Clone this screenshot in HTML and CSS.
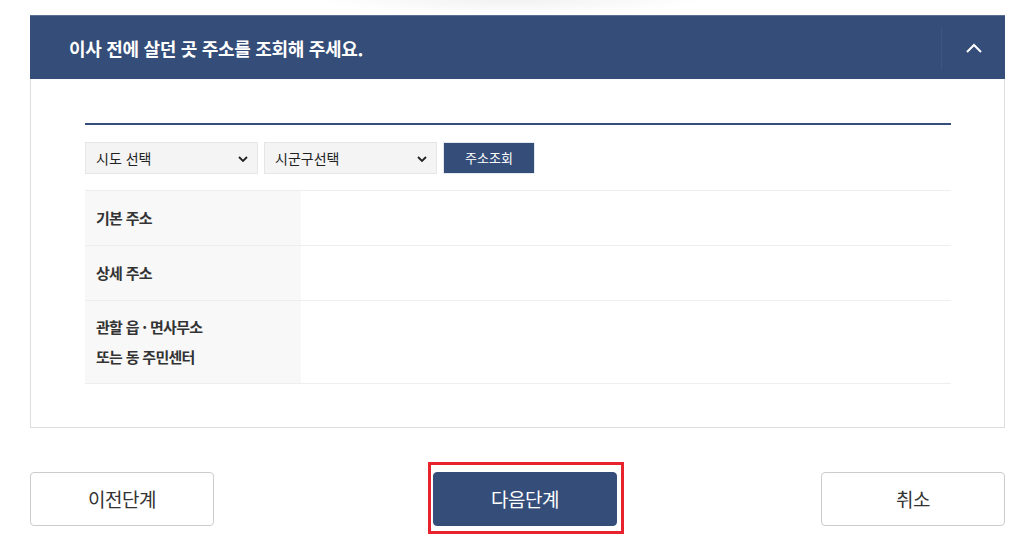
FILE: index.html
```html
<!DOCTYPE html>
<html lang="ko">
<head>
<meta charset="utf-8">
<title>주소 조회</title>
<link rel="stylesheet" href="styles.css">
</head>
<body>
<div class="page">
  <div class="top-fade"></div>
  <section class="panel">
    <header class="panel-head">
      <h2 class="panel-title">이사 전에 살던 곳 주소를 조회해 주세요.</h2>
      <button class="toggle" type="button" aria-label="접기">
        <svg width="16" height="10" viewBox="0 0 16 10"><path d="M1 9 L8 2 L15 9" fill="none" stroke="#ffffff" stroke-width="2"/></svg>
      </button>
    </header>
    <div class="panel-body">
      <div class="rule"></div>
      <div class="search-row">
        <div class="select"><span>시도 선택</span>
          <svg width="10" height="6" viewBox="0 0 10 6"><path d="M1 1 L5 5 L9 1" fill="none" stroke="#222" stroke-width="1.8"/></svg>
        </div>
        <div class="select"><span>시군구선택</span>
          <svg width="10" height="6" viewBox="0 0 10 6"><path d="M1 1 L5 5 L9 1" fill="none" stroke="#222" stroke-width="1.8"/></svg>
        </div>
        <button class="search-btn" type="button">주소조회</button>
      </div>
      <div class="info-table">
        <div class="info-row">
          <div class="info-label">기본 주소</div>
          <div class="info-value"></div>
        </div>
        <div class="info-row">
          <div class="info-label">상세 주소</div>
          <div class="info-value"></div>
        </div>
        <div class="info-row">
          <div class="info-label">관할 읍 · 면사무소<br>또는 동 주민센터</div>
          <div class="info-value"></div>
        </div>
      </div>
    </div>
  </section>
  <div class="actions">
    <button class="btn" type="button">이전단계</button>
    <div class="highlight">
      <button class="btn btn-primary" type="button">다음단계</button>
    </div>
    <button class="btn" type="button">취소</button>
  </div>
</div>
</body>
</html>
```

FILE: styles.css
```css
* { box-sizing: border-box; }
html, body { margin: 0; padding: 0; background: #ffffff; }
body {
  font-family: "Noto Sans CJK KR", "Noto Sans", sans-serif;
  color: #333333;
  width: 1024px;
  height: 541px;
  overflow: hidden;
}
.page {
  padding: 0 19px 0 30px;
}
.top-fade {
  height: 15px;
  margin: 0 -19px 0 -30px;
  background: radial-gradient(ellipse 190px 14px at 50% 0, #f2f2f2 0%, #f8f8f8 50%, rgba(255,255,255,0) 100%);
}
.panel { width: 975px; }
.panel-head {
  height: 64px;
  background: #344d79;
  border-top: 1px solid #5b6f95;
  display: flex;
  align-items: center;
  justify-content: space-between;
  padding-left: 39px;
}
.panel-title {
  margin: 0;
  color: #ffffff;
  font-size: 18px;
  font-weight: 700;
  letter-spacing: -0.3px;
  line-height: 1;
  padding-top: 1px;
}
.toggle {
  width: 64px;
  height: 43px;
  border: 0;
  border-left: 1px solid #3e5682;
  background: transparent;
  padding: 0;
  display: flex;
  align-items: center;
  justify-content: center;
  margin-top: 1px;
}
.toggle svg { display: block; margin-top: -1px; }
.panel-body {
  border: 1px solid #dddddd;
  border-top: 0;
  padding: 44px 53px 43px 54px;
}
.rule {
  height: 2px;
  background: #344d79;
}
.search-row {
  display: flex;
  gap: 6px;
  margin-top: 17px;
}
.select {
  width: 173px;
  height: 32px;
  background: #f4f4f4;
  border: 1px solid #e6e6e6;
  display: flex;
  align-items: center;
  justify-content: space-between;
  padding: 0 9px 0 10px;
  font-size: 14px;
  color: #222222;
}
.select svg { display: block; margin-top: 1px; }
.search-btn {
  width: 92px;
  height: 32px;
  background: #344d79;
  border: 1px solid #e3e7ee;
  color: #ffffff;
  font-family: inherit;
  font-size: 13px;
  padding: 0 0 2px;
}
.info-table {
  margin-top: 16px;
  border-top: 1px solid #eeeeee;
}
.info-row {
  display: flex;
  border-bottom: 1px solid #eeeeee;
}
.info-label {
  width: 216px;
  flex: none;
  background: #f8f8f8;
  padding: 12px 11px;
  font-size: 15px;
  font-weight: 700;
  line-height: 30px;
  letter-spacing: -0.7px;
  color: #333333;
}
.info-row:last-child .info-label { padding: 11px 11px; }
.info-value { flex: 1; }
.actions {
  display: flex;
  justify-content: space-between;
  align-items: center;
  margin-top: 44px;
  width: 975px;
}
.btn {
  width: 184px;
  height: 54px;
  border: 1px solid #cccccc;
  border-radius: 4px;
  background: #ffffff;
  color: #333333;
  font-family: inherit;
  font-size: 19px;
  letter-spacing: -0.5px;
  padding: 0 0 2px;
}
.highlight {
  position: relative;
  margin-left: 15px;
}
.highlight::after {
  content: "";
  position: absolute;
  top: -10px;
  left: -5px;
  right: -7px;
  bottom: -8px;
  border: 3px solid #e8232e;
  pointer-events: none;
}
.btn.btn-primary {
  display: block;
  background: #344d79;
  border-color: #344d79;
  color: #ffffff;
}
```
